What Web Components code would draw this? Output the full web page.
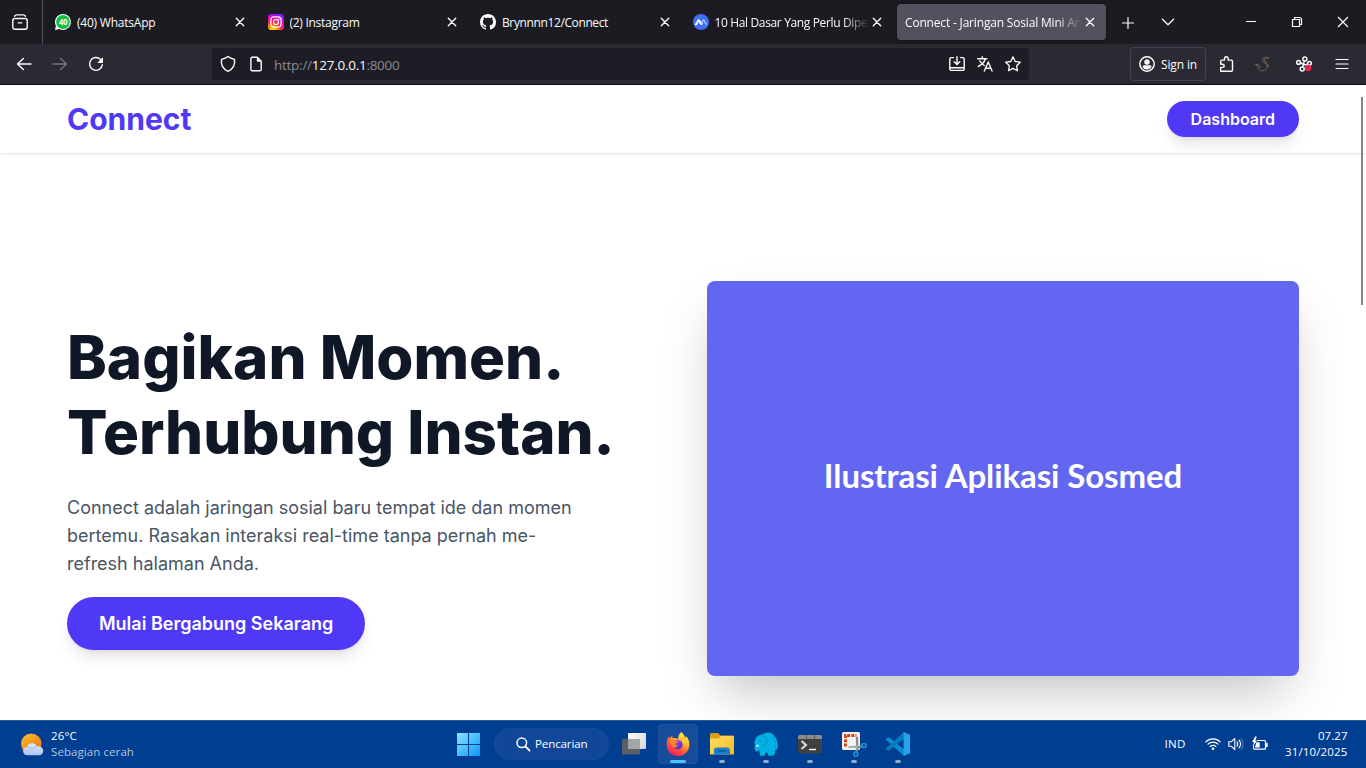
<!DOCTYPE html>
<html lang="id">
<head>
<meta charset="utf-8">
<title>Connect - Jaringan Sosial Mini</title>
<style>
html,body{margin:0;padding:0;background:#fff}
body{width:1366px;height:768px;overflow:hidden;font-family:"Open Sans","Noto Sans",sans-serif}
</style>
</head>
<body>
<desktop-screen></desktop-screen>
<script>
const define = (name, css, html, setup) => {
  const template = document.createElement('template');
  template.innerHTML = `<style>*{box-sizing:border-box}${css}</style>${html}`;
  customElements.define(name, class extends HTMLElement {
    connectedCallback() {
      if (this.shadowRoot) return;
      this.attachShadow({mode: 'open'}).append(template.content.cloneNode(true));
      if (setup) setup.call(this, this.shadowRoot);
    }
  });
};

const line = 'fill="none" stroke="currentColor" stroke-linecap="round" stroke-linejoin="round"';
const ICONS = {
  view: `<g ${line} stroke-width="1.4"><path d="M2.6 2.3C3 1.2 3.6.9 4.600.9h6.800c1 0 1.600.3 2 1.400"/><rect x=".8" y="4.500" width="14.400" height="10.700" rx="1.900"/><path d="M6.300 8.900h3.400"/></g>`,
  whatsapp: `<path d="M8 0a8 8 0 1 1-3.700 15.100L0 16l.9-4.300A8 8 0 0 1 8 0z" fill="#fff"/><circle cx="8" cy="8" r="6.900" fill="#12c143"/><text x="8" y="10.800" text-anchor="middle" font-family="Open Sans,sans-serif" font-weight="700" font-size="8" letter-spacing="-.3" fill="#fff">40</text>`,
  instagram: `<defs><radialGradient id="i" cx=".28" cy="1.050" r="1.050"><stop offset="0" stop-color="#ffdc00"/><stop offset=".25" stop-color="#ffae00"/><stop offset=".5" stop-color="#ff2d3f"/><stop offset=".78" stop-color="#fb00c8"/><stop offset="1" stop-color="#7a1cff"/></radialGradient></defs><rect width="16" height="16" rx="3.600" fill="url(#i)"/><g fill="none" stroke="#fff" stroke-width="1.200"><rect x="2.900" y="2.900" width="10.200" height="10.200" rx="3"/><circle cx="8" cy="8" r="2.500"/></g><circle cx="10.900" cy="5.100" r=".75" fill="#fff"/>`,
  github: `<path fill="#fff" d="M8 0C3.580 0 0 3.580 0 8c0 3.540 2.290 6.530 5.470 7.590.4.070.55-.17.55-.38 0-.19-.01-.82-.01-1.490-2.010.37-2.530-.49-2.690-.94-.09-.23-.48-.94-.82-1.130-.28-.15-.68-.52-.01-.53.63-.01 1.080.58 1.230.82.72 1.210 1.870.87 2.330.66.070-.52.28-.87.51-1.070-1.780-.2-3.640-.89-3.640-3.950 0-.87.31-1.590.82-2.150-.08-.2-.36-1.020.08-2.120 0 0 .67-.21 2.200.82.64-.18 1.320-.27 2-.27s1.360.09 2 .27c1.530-1.040 2.200-.82 2.200-.82.44 1.100.16 1.920.08 2.120.51.56.82 1.270.82 2.150 0 3.070-1.870 3.750-3.650 3.950.29.25.54.73.54 1.480 0 1.070-.01 1.930-.01 2.200 0 .21.15.46.55.38A8 8 0 0 0 16 8c0-4.420-3.580-8-8-8z"/>`,
  wave: `<circle cx="8" cy="8" r="8" fill="#3e70f6"/><path d="M2.700 10.300c1.100 0 1.300-.9 1.800-2.400.6-2 1.600-2.200 2.300-.4.600 1.600 1 2.800 2 2.400" fill="none" stroke="#fff" stroke-width="1.900" stroke-linecap="round"/><path d="M8.700 9.700c.5-1 .6-3.700 1.800-3.700 1.300 0 1.200 3.900 2.900 4.100" fill="none" stroke="#a9c3ff" stroke-width="1.500" stroke-linecap="round"/>`,
  close: `<path d="M4.300 4.300l7.400 7.400m0-7.400l-7.400 7.400" ${line} stroke-width="1.400"/>`,
  plus: `<path d="M8 2.500v11M2.500 8h11" ${line} stroke-width="1.200"/>`,
  chevron: `<path d="M2.400 5.300L8 10.800l5.600-5.500" ${line} stroke-width="1.300"/>`,
  minimize: `<path d="M3 7.500h10" stroke="currentColor"/>`,
  restore: `<path d="M3.500 5.500h7v7h-7zM5.500 5.300V3.500h5a2 2 0 0 1 2 2v5h-1.800" fill="none" stroke="currentColor" stroke-width="1.200"/>`,
  winclose: `<path d="M3 3l10 10M13 3L3 13" stroke="currentColor" stroke-width="1.200"/>`,
  back: `<path d="M15 8H1.700M7.400 2.500L1.500 8l5.900 5.500" ${line} stroke-width="1.400"/>`,
  forward: `<path d="M1 8h13.300M8.600 2.500L14.500 8l-5.900 5.500" ${line} stroke-width="1.400"/>`,
  reload: `<path d="M14.300 8.800A6.400 6.400 0 1 1 12.400 3.300" ${line} stroke-width="1.400"/><path d="M15 1v5.400a.5.5 0 0 1-.5.500H9.300z" fill="currentColor"/>`,
  shield: `<path d="M8 .5c2 1.500 4 2.200 6.500 2.900C15.300 8.600 13 13 8 15.400 3 13 .7 8.600 1.500 3.400 4 2.700 6 2 8 .5z" ${line} stroke-width="1.400"/>`,
  page: `<path d="M9.300 1.300H4.200a1.300 1.300 0 0 0-1.300 1.300v10.800a1.300 1.300 0 0 0 1.300 1.300h7.700a1.300 1.300 0 0 0 1.300-1.300V5.200z" ${line} stroke-width="1.400"/><path d="M8.800 1v3.700c0 .6.400 1 1 1h3.900z" fill="currentColor"/>`,
  install: `<g ${line} stroke-width="1.400"><path d="M4.500 1.600H2.200A1.400 1.400 0 0 0 .8 3v10a1.400 1.400 0 0 0 1.400 1.400h11.600a1.400 1.400 0 0 0 1.400-1.400V3a1.400 1.400 0 0 0-1.400-1.400h-2.300M.9 11.700h14.200M8 .8v7.300M5.200 5.700L8 8.500l2.800-2.800"/></g>`,
  translate: `<g ${line} stroke-width="1.400"><path d="M.7 2.700h9.200M5.200.7v2M8.200 3c-.8 3-3.300 5.700-7 7.500M2.800 4.800c1.100 2.100 2.700 3.700 4.500 4.700M7.300 15l3.900-9 3.900 9M8.700 12.200h5"/></g>`,
  star: `<path d="M8 .9l2.200 4.600 5.100.7-3.700 3.500.9 5.100L8 12.400l-4.500 2.400.9-5.100L.7 6.200l5.100-.7z" ${line} stroke-width="1.300"/>`,
  account: `<circle cx="8" cy="8" r="7.200" ${line} stroke-width="1.500"/><circle cx="8" cy="6" r="2.700" fill="currentColor"/><path d="M3.500 11c0-1.100.8-1.700 1.800-1.700h5.400c1 0 1.800.6 1.800 1.700C11.500 12.700 9.900 13.500 8 13.500S4.500 12.700 3.500 11z" fill="currentColor"/>`,
  puzzle: `<path d="M1.700 5.300c0-.7.500-1.200 1.200-1.200h2.600V2.700C5.500 1.600 6.300.8 7.300.8s1.800.8 1.800 1.900v1.400h3.200c.7 0 1.200.5 1.200 1.200v8.800c0 .7-.5 1.200-1.200 1.200H1.700v-3.900h1.700c1.100 0 1.800-.7 1.800-1.500s-.7-1.600-1.800-1.600H1.700z" ${line} stroke-width="1.400"/>`,
  sting: `<path d="M13.800 1.800C11 .3 7 1.600 7.400 4.300 7.800 7 12.400 7 12.300 10.300 12.200 14.200 6.500 16.300 4.300 13.600 3 12 3 9.600.6 8.300M13.600 2.100c-2.400-.5-4.500.3-4.300 2 .3 2.400 4.600 3.200 4.100 6.500M.8 8.300c1.800-.2 3.600 1 4.600 3" fill="none" stroke="#7c6a62" stroke-width=".9" stroke-linecap="round"/>`,
  molecule: `<g ${line} stroke-width="1.500"><circle cx="8.800" cy="2.900" r="2"/><circle cx="2.600" cy="6.400" r="1.900"/><circle cx="13.400" cy="7.300" r="1.900"/><circle cx="6.200" cy="13" r="2"/><path d="M8.300 4.900L6.700 11M4.500 7l5 2 2.200-.9"/></g><circle cx="12.200" cy="12" r="3.200" fill="#e22850"/>`,
  menu: `<path d="M2 3.500h12M2 8h12M2 12.500h12" ${line} stroke-width="1.200"/>`,
  weather: `<defs><linearGradient id="s" x2=".8" y2="1"><stop stop-color="#fbbf2b"/><stop offset="1" stop-color="#e87519"/></linearGradient><linearGradient id="c" x2="0" y2="1"><stop stop-color="#dfe9fb"/><stop offset="1" stop-color="#a9c4f2"/></linearGradient></defs><circle cx="10.300" cy="10.800" r="10.300" fill="url(#s)"/><path d="M6.500 22.300a4.200 4.200 0 0 1-.5-8.400c1-4.200 7.800-5.200 9.900-.6 3.500-.3 6.300 1.700 6.300 4.600 0 2.700-1.900 4.400-4.500 4.400z" fill="url(#c)"/><path d="M6 14c2.500 0 4 1 4.700 3 1.500-2 3-3.300 5.200-3.700" fill="none" stroke="#8fb0ea" stroke-width=".7"/>`,
  windows: `<defs><linearGradient id="w" x2="1" y2="1" gradientUnits="userSpaceOnUse" gradientTransform="scale(23)"><stop stop-color="#8de5ff"/><stop offset="1" stop-color="#0a96f5"/></linearGradient></defs><path d="M0 0h11v11H0zM12 0h11v11H12zM0 12h11v11H0zM12 12h11v11H12z" fill="url(#w)"/>`,
  search: `<circle cx="5.800" cy="5.800" r="4.800" fill="none" stroke="#fff" stroke-width="1.500"/><path d="M9.300 9.300l4.200 4.200" stroke="#fff" stroke-width="1.800" stroke-linecap="round"/>`,
  taskview: `<defs><linearGradient id="t" x2="1" y2="1"><stop stop-color="#fff"/><stop offset="1" stop-color="#d2d2d2"/></linearGradient></defs><rect y="7" width="18" height="15.500" rx="1" fill="#5c6064"/><rect x="6" y="1" width="18" height="16" rx="1" fill="url(#t)"/><path d="M6 7h12v10H6z" fill="#a2a5a8"/>`,
  firefox: `<defs><linearGradient id="f" x1=".85" y1=".05" x2=".25" y2="1"><stop stop-color="#fff44f"/><stop offset=".35" stop-color="#ffb52d"/><stop offset=".65" stop-color="#ff5634"/><stop offset="1" stop-color="#f21471"/></linearGradient><linearGradient id="p" x2=".5" y2="1"><stop stop-color="#a04dff"/><stop offset="1" stop-color="#5730bd"/></linearGradient></defs><path d="M15.200 0c2.500 2 3.500 4 4 6 .6-.5.800-1.200.7-2 2.200 2 3.600 5.100 3.400 8.600A11.300 11.300 0 0 1 12 24C5.500 24 .6 19 .6 12.700c0-3.300.8-6 2.400-8.200l.4 2.200c.8-1.300 1.800-2.300 3-3v2.400c2.300-.5 4.400.2 5.800 1C12 5 12.700 2 15.200 0z" fill="url(#f)"/><circle cx="11.800" cy="12.700" r="4.800" fill="url(#p)"/><path d="M4.500 7c2 1.700 4.700 1.200 7.600 2.300l-1 1.700c-1.500 0-2.100.7-2.200 1.400.8.600 1.900.7 3 .3-.8 2.600-3.300 3.300-5.500 2.200C4.500 13 3.500 9.500 4.500 7z" fill="#ff8427"/><path d="M14.800 8c2.500 1 3.500 3.600 2.900 5.800 1.500-2 1.300-5-.3-6.800z" fill="#ffd235"/>`,
  folder: `<defs><linearGradient id="d" x2="1" y2="1"><stop stop-color="#ffdf6f"/><stop offset="1" stop-color="#f5b915"/></linearGradient></defs><path d="M0 2.500A1.500 1.500 0 0 1 1.500 1H8l2.500 2.500H24v4H0z" fill="#dda012"/><path d="M0 6.500h8.500L11 4h11.500A1.500 1.500 0 0 1 24 5.500V22.500H0z" fill="url(#d)"/><path d="M4 22.500v-4a3 3 0 0 1 3-3h10a3 3 0 0 1 3 3v4z" fill="#167fcd"/><path d="M8 19h8" stroke="#07559d" stroke-width="1.300" stroke-linecap="round"/>`,
  elephant: `<path d="M9 2.500C11-.3 18.500-.7 20.300 4c3 2.500 3.900 8.500 3.300 12.500l-2.200 1.800-.8 4.200-1.600 1.300h-4.600l-.7-3h-2.500l-.5 3H6.200l-1-5.300c-1.500-.3-1.700 1.700-2.900.9C.6 18.300.3 15 1 12c-1-1-.5-3 .2-4C2 5 5 2.200 9 2.500z" fill="#00b1e6"/><path d="M9.500 4c3.500.3 4.500 4.500 2.500 7.500-1 1.500-2.800 2.500-4.300 1.900M18.500 4c2.300 3 3 7.500 2.700 13" fill="none" stroke="#068bc0" stroke-width=".8"/><circle cx="6" cy="9" r=".7" fill="#064575"/><path d="M2.500 12.300l3 1.400-3 1.500z" fill="#d9f4ff"/>`,
  terminal: `<rect y="3" width="24" height="18.500" rx="1.500" fill="#404040"/><path d="M0 7V4.500A1.500 1.500 0 0 1 1.500 3h21A1.500 1.500 0 0 1 24 4.500V7z" fill="#8b8b8b"/><path d="M8 3h1v4H8zm8 0h1v4h-1z" fill="#5a5a5a"/><path d="M3.500 9l4.500 4-4.500 4" fill="none" stroke="#ddd" stroke-width="2"/><path d="M11 17.500h7" stroke="#fff" stroke-width="1.400"/>`,
  snip: `<rect width="18" height="18" rx="1.500" fill="#f2f2f2"/><path d="M3.500 14.500v-11h11" fill="none" stroke="#d8431b" stroke-width="3" stroke-dasharray="3 1.200"/><path d="M13.800 5h2.400v9l4.300-.7.600 1.300-4.700 2.200-1.500 4-1.800-.6 1.200-3.300z" fill="#858d94"/><path d="M6 14.200l9.500-.7v2.800L6 15.700z" fill="#a6adb2"/><circle cx="22" cy="13.500" r="2" fill="none" stroke="#1992d6" stroke-width="1.700"/><circle cx="13.800" cy="22" r="2" fill="none" stroke="#1992d6" stroke-width="1.700"/>`,
  vscode: `<path d="M.4 8.300a1 1 0 0 1 0-1.500l1.500-1.400a1 1 0 0 1 1.300 0L18 17.200V24z" fill="#0c8bd5"/><path d="M18 0v6.800L3.200 18.600a1 1 0 0 1-1.300 0L.4 17.200a1 1 0 0 1 0-1.500z" fill="#087ac2"/><path d="M17.600 0L24 2.800v18.400L17.600 24z" fill="#24a4ed"/>`,
  wifi: `<g fill="none" stroke="#fff" stroke-width="1.200" stroke-linecap="round"><path d="M.8 5.800c4-4 10.400-4 14.400 0M3 8.200c2.800-2.800 7.200-2.800 10 0M5.200 10.500c1.600-1.600 4-1.600 5.600 0"/></g><circle cx="8" cy="12.800" r="1.300" fill="#fff"/>`,
  volume: `<g fill="none" stroke="#fff" stroke-width="1.100" stroke-linejoin="round" stroke-linecap="round"><path d="M.8 5.800h2.400l3.600-3.300v11L3.200 10.200H.8zM9 5.900c1 1.300 1 2.900 0 4.200M11 4.200c2 2.400 2 5.200 0 7.600"/><path d="M13 2.700c2.600 3.200 2.600 7.400 0 10.600" stroke="#4c78b5"/></g>`,
  battery: `<path d="M5 4.500h7.500a1 1 0 0 1 1 1v6.700a1 1 0 0 1-1 1h-10a1 1 0 0 1-1-1V9" fill="none" stroke="#fff" stroke-width="1.200"/><path d="M14 7h1.700v4H14zM2.900 11.500h4.800V6.200H4.400z" fill="#fff"/><path d="M3.400.3L0 6h2l-1 4 4-5.300H3.200L4.800.8z" fill="#fff"/>`
};

define('ui-icon', `:host{display:block;flex:none;width:var(--size,16px);height:var(--size,16px)}svg{display:block;width:100%;height:100%;overflow:visible}`, ``, function (root) {
  const box = this.getAttribute('box') || '16';
  root.innerHTML += `<svg viewBox="0 0 ${box} ${box}" aria-hidden="true">${ICONS[this.getAttribute('name')]}</svg>`;
});

/* Single-line label; "fit" spreads its letters over a given width in pixels. */
define('ui-label', `:host{display:block;flex:none;white-space:nowrap}span{display:inline-block}`, `<span><slot></slot></span>`, function (root) {
  const target = parseFloat(this.getAttribute('fit'));
  if (!target) return;
  const width = root.querySelector('span').getBoundingClientRect().width;
  this.style.letterSpacing = ((target - width) / this.textContent.length) + 'px';
});

define('browser-tab', `
:host{display:flex;align-items:center;flex:none;width:208.500px;height:36px;padding:0 8px;border-radius:4px;color:#fbfbfe;font-size:12px}
:host([active]){background:#52525e;box-shadow:0 0 3px rgba(0,0,0,.5)}
.title{flex:1;min-width:0;overflow:hidden;margin:2px 0 0 6px;line-height:20px}
:host([active]) .title{margin-left:0}
:host([fade]) .title{-webkit-mask-image:linear-gradient(to left,transparent 0,#000 26px);mask-image:linear-gradient(to left,transparent 0,#000 26px)}`, `<slot name="icon"></slot><div class="title"><slot></slot></div><ui-icon class="x" name="close"></ui-icon>`);

define('tab-strip', `
:host{display:flex;height:44px;background:#1c1b22;color:#fbfbfe;align-items:center}
.view{width:43px;height:44px;padding:14px 0 0 12px;border-right:1px solid #55545d;margin-right:4px}
.tabs{display:flex;gap:4px;flex:none}
.plus{margin:1px 0 0 14px}.chev{margin-left:24px}
.window{display:flex;gap:30px;margin-left:auto;padding-right:15px}`, `
<div class="view"><ui-icon name="view"></ui-icon></div>
<div class="tabs">
<browser-tab><ui-icon slot="icon" name="whatsapp"></ui-icon><ui-label fit="78.5">(40) WhatsApp</ui-label></browser-tab>
<browser-tab><ui-icon slot="icon" name="instagram"></ui-icon><ui-label fit="70">(2) Instagram</ui-label></browser-tab>
<browser-tab><ui-icon slot="icon" name="github"></ui-icon><ui-label fit="106">Brynnnn12/Connect</ui-label></browser-tab>
<browser-tab fade><ui-icon slot="icon" name="wave"></ui-icon><ui-label fit="155.5">10 Hal Dasar Yang Perlu Dipel</ui-label></browser-tab>
<browser-tab active fade><ui-label fit="177">Connect - Jaringan Sosial Mini An</ui-label></browser-tab>
</div>
<ui-icon class="plus" name="plus"></ui-icon><ui-icon class="chev" name="chevron"></ui-icon>
<div class="window"><ui-icon name="minimize"></ui-icon><ui-icon name="restore"></ui-icon><ui-icon name="winclose"></ui-icon></div>`);

define('address-bar', `
:host{display:flex;align-items:center;width:817px;height:32px;padding:0 8px;border-radius:4px;background:#1e1d25;color:#fbfbfe}
.page{margin:0 10px 0 12px}.url{font-size:13.500px;color:#fbfbfe;margin-top:2px}.dim{color:#8b8a91}
.actions{display:flex;gap:12px;margin-left:auto}`, `
<ui-icon name="shield"></ui-icon><ui-icon class="page" name="page"></ui-icon>
<ui-label class="url" fit="125.5"><span class="dim">http://</span>127.0.0.1<span class="dim">:8000</span></ui-label>
<div class="actions"><ui-icon name="install"></ui-icon><ui-icon name="translate"></ui-icon><ui-icon name="star"></ui-icon></div>`);

define('browser-toolbar', `
:host{display:flex;align-items:center;height:41px;padding:0 16px;background:#2b2a33;border-bottom:1px solid #0c0c0d;color:#fbfbfe}
.nav{display:flex;gap:20px;margin-right:108px}.off{color:#78777f}
.sign{display:flex;align-items:center;gap:6px;width:76px;height:34px;margin-left:101px;padding-left:8px;border:1px solid #45444e;border-radius:4px;font-size:12px}
.tools{display:flex;margin-left:auto}.tools>*{margin-left:22px}.tools>:first-child{margin:0}.tools>:nth-child(2){margin-left:20px}.tools>:nth-child(3){margin-left:25px}`, `
<div class="nav"><ui-icon name="back"></ui-icon><ui-icon class="off" name="forward"></ui-icon><ui-icon name="reload"></ui-icon></div>
<address-bar></address-bar>
<div class="sign"><ui-icon name="account"></ui-icon><ui-label fit="36">Sign in</ui-label></div>
<div class="tools"><ui-icon name="puzzle"></ui-icon><ui-icon name="sting"></ui-icon><ui-icon name="molecule"></ui-icon><ui-icon name="menu"></ui-icon></div>`);

define('pill-button', `
:host{display:inline}
a{border-radius:9999px;background:#4f39f6;color:#fff;font-weight:600;padding:8px 24px;box-shadow:0 10px 15px -3px rgba(0,0,0,.1),0 4px 6px -4px rgba(0,0,0,.1)}
:host([large]) a{padding:16px 32px}`, `<a><slot></slot></a>`);

define('site-header', `
:host{display:flex;justify-content:space-between;align-items:center;height:68px;padding:16px 67px;background:#fff;box-shadow:0 1px 3px rgba(0,0,0,.1),0 1px 2px -1px rgba(0,0,0,.1);position:relative}
.logo{font-size:30px;line-height:36px;font-weight:700;color:#4f39f6}
nav{font-size:16px;line-height:24px}`, `<div class="logo">Connect</div><nav><pill-button>Dashboard</pill-button></nav>`);

define('hero-illustration', `
:host{display:flex;align-items:center;justify-content:center;height:394.670px;padding-bottom:6px;border-radius:8px;background:#6366f1;box-shadow:0 25px 50px -12px rgba(0,0,0,.25);font:700 33px/40px Lato,sans-serif;color:#fff}`, `<ui-label style="letter-spacing:-.1px"><slot></slot></ui-label>`);

define('hero-section', `
:host{display:grid;grid-template-columns:592px 592px;gap:48px;align-items:center;padding:128px 67px 0}
.copy{padding-top:2px}
h1{margin:0 0 24px;font-size:60px;line-height:75px;font-weight:800;color:#101828}
p{margin:0 0 32px;max-width:512px;font-size:18px;line-height:28px;color:#4a5565}
.cta{font-size:18px;line-height:28px}`, `
<div class="copy"><h1>Bagikan Momen.<br>Terhubung Instan.</h1>
<p>Connect adalah jaringan sosial baru tempat ide dan momen bertemu. Rasakan interaksi real-time tanpa pernah me-refresh halaman Anda.</p>
<div class="cta"><pill-button large>Mulai Bergabung Sekarang</pill-button></div></div>
<hero-illustration>Ilustrasi Aplikasi Sosmed</hero-illustration>`);

define('connect-page', `
:host{display:block;position:relative;height:635px;overflow:hidden;background:#fff;font-family:Inter,sans-serif}
.thumb{position:absolute;right:3px;top:12px;width:2px;height:208px;background:#8f8287}`, `
<site-header></site-header><hero-section></hero-section><div class="thumb"></div>`);

define('task-button', `
:host{display:flex;flex-direction:column;align-items:center;width:40px;height:40px;padding-top:7px;border-radius:4px;border:1px solid transparent;--size:24px}
:host([active]){background:#164c9a;border-color:#1f549f}
i{display:none;flex:none;width:6px;height:3px;border-radius:2px;background:#93a9cf;margin-top:4px}
:host([running]) i{display:block}:host([active]) i{width:16px;background:#4cc2ff}`, `<slot></slot><i></i>`);

define('task-bar', `
:host{display:flex;align-items:center;height:48px;padding-bottom:1px;background:#003e92;border-top:1px solid #2a5a9c;color:#fff;font-size:11.500px;line-height:16px}
.weather{display:flex;align-items:center;gap:7px;width:448px;padding-left:21px;--size:23px}
.sub{color:#b3c5de}
.apps{display:flex;align-items:center;gap:4px}
.search{display:flex;align-items:center;gap:5px;width:115px;height:32px;margin:0 1px 0 2px;padding-left:21px;border-radius:16px;background:#114798;border:1px solid #164d9a;--size:14px}
.tray{display:flex;align-items:center;margin-left:auto;padding-right:18.500px}
.tray ui-icon{margin-left:7.500px}.tray .wifi{margin-left:19px}
.clock{margin-left:17.500px;display:flex;flex-direction:column;align-items:flex-end}`, `
<div class="weather"><ui-icon name="weather" box="23"></ui-icon><div><ui-label fit="26">26°C</ui-label><ui-label class="sub" fit="83">Sebagian cerah</ui-label></div></div>
<div class="apps">
<task-button><ui-icon style="--size:23px;margin-top:1px" name="windows" box="23"></ui-icon></task-button>
<div class="search"><ui-icon name="search" box="14"></ui-icon><ui-label fit="52.5">Pencarian</ui-label></div>
<task-button><ui-icon name="taskview" box="24"></ui-icon></task-button>
<task-button active running><ui-icon name="firefox" box="24"></ui-icon></task-button>
<task-button running><ui-icon name="folder" box="24"></ui-icon></task-button>
<task-button running><ui-icon name="elephant" box="24"></ui-icon></task-button>
<task-button running><ui-icon name="terminal" box="24"></ui-icon></task-button>
<task-button running><ui-icon name="snip" box="24"></ui-icon></task-button>
<task-button running><ui-icon name="vscode" box="24"></ui-icon></task-button>
</div>
<div class="tray"><ui-label fit="21">IND</ui-label><ui-icon class="wifi" name="wifi"></ui-icon><ui-icon name="volume"></ui-icon><ui-icon name="battery"></ui-icon>
<div class="clock"><ui-label fit="29.5">07.27</ui-label><ui-label fit="62.5">31/10/2025</ui-label></div></div>`);

define('desktop-screen', `:host{display:flex;flex-direction:column;width:1366px;height:768px;overflow:hidden}:host>*{flex:none}connect-page{flex:none}`, `
<tab-strip></tab-strip><browser-toolbar></browser-toolbar><connect-page></connect-page><task-bar></task-bar>`);
</script>
</body>
</html>
